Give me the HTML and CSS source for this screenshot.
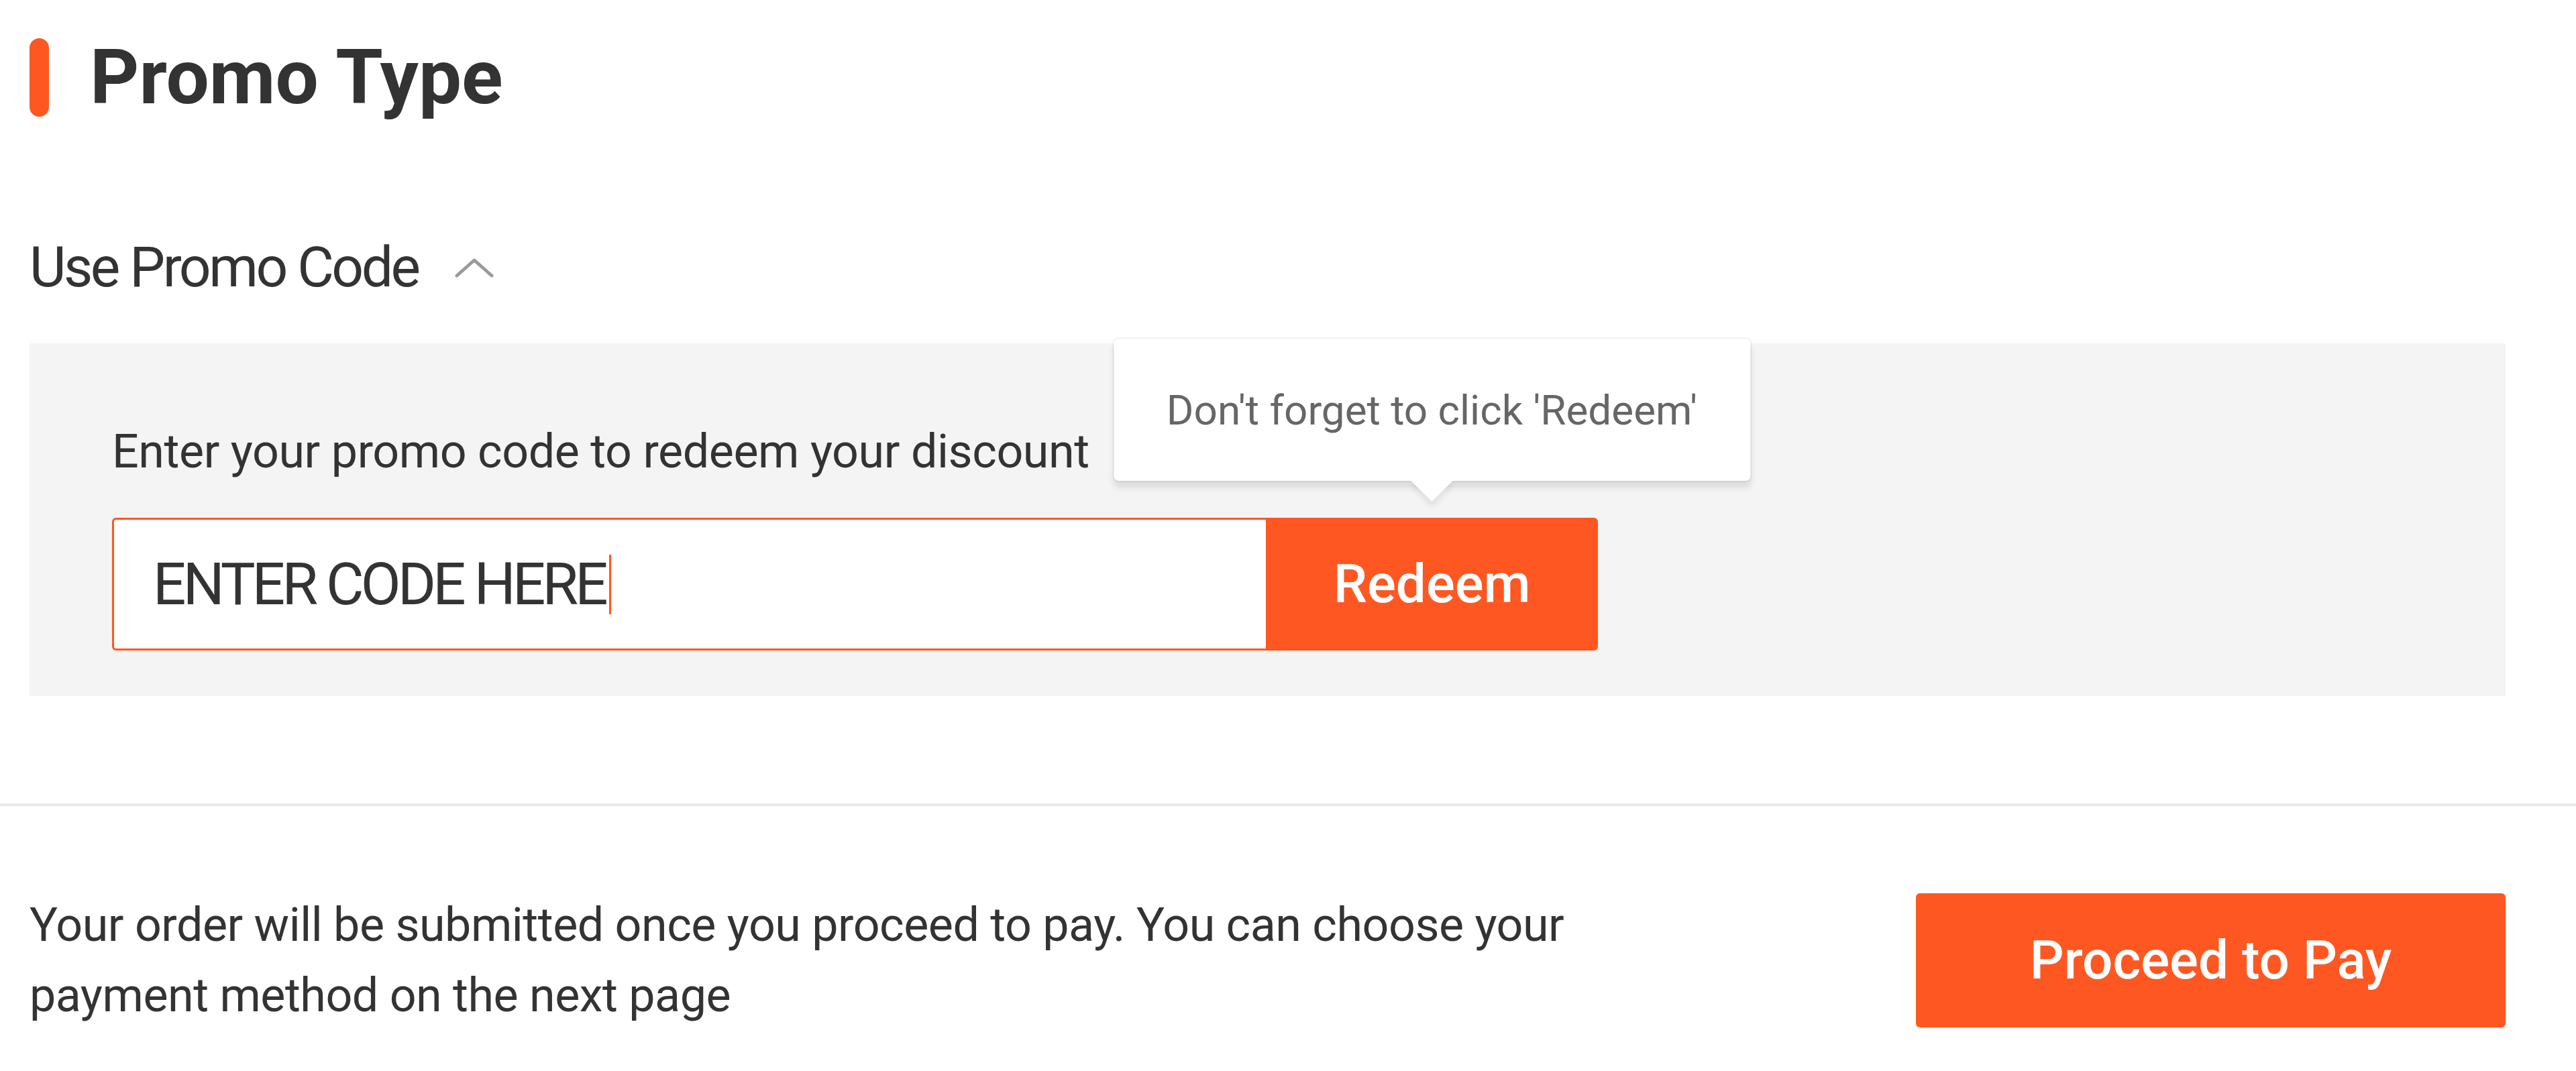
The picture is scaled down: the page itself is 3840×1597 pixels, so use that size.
FILE: index.html
```html
<!DOCTYPE html>
<html lang="en">
<head>
<meta charset="utf-8">
<title>Promo Type</title>
<link rel="stylesheet" href="styles.css">
</head>
<body>
<main class="checkout">
  <section class="promo">
    <header class="section-head">
      <span class="accent-bar"></span>
      <h2 class="section-title">Promo Type</h2>
    </header>

    <div class="toggle-row">
      <span class="toggle-label">Use Promo Code</span>
      <svg class="chevron" viewBox="0 0 58 30" width="58" height="30" aria-hidden="true">
        <polyline points="3,27 29,4 55,27" fill="none" stroke="#9a9a9a" stroke-width="5" stroke-linecap="round" stroke-linejoin="round"/>
      </svg>
    </div>

    <div class="promo-panel">
      <p class="promo-hint">Enter your promo code to redeem your discount</p>
      <div class="code-form">
        <div class="code-input" role="textbox">
          <span class="code-text">ENTER CODE HERE</span><span class="caret"></span>
        </div>
        <div class="redeem-wrap">
          <button class="btn redeem-btn" type="button">Redeem</button>
          <div class="tooltip">Don't forget to click 'Redeem'</div>
        </div>
      </div>
    </div>
  </section>

  <footer class="order-footer">
    <p class="order-note">Your order will be submitted once you proceed to pay. You can choose your payment method on the next page</p>
    <button class="btn pay-btn" type="button">Proceed to Pay</button>
  </footer>
</main>
</body>
</html>
```

FILE: styles.css
```css
* {
  box-sizing: border-box;
}

html, body {
  margin: 0;
  padding: 0;
  background: #ffffff;
}

body {
  font-family: Roboto, "Liberation Sans", Arial, sans-serif;
  color: #333333;
}

.checkout {
  width: 3840px;
}

.promo {
  padding: 57px 105px 0 44px;
}

.section-head {
  display: flex;
  align-items: center;
  gap: 61px;
  height: 117px;
}

.accent-bar {
  display: block;
  width: 29px;
  height: 117px;
  border-radius: 15px;
  background: #ff5722;
}

.section-title {
  margin: 0;
  font-size: 114px;
  line-height: 117px;
  font-weight: 700;
  color: #333333;
}

.toggle-row {
  display: flex;
  align-items: center;
  gap: 54px;
  height: 100px;
  margin-top: 175px;
}

.toggle-label {
  font-size: 84px;
  line-height: 100px;
  letter-spacing: -3.5px;
  color: #333333;
}

.chevron {
  display: block;
}

.promo-panel {
  margin-top: 63px;
  background: #f4f4f4;
  padding: 120px 123px 68px;
}

.promo-hint {
  margin: 0;
  font-size: 70px;
  line-height: 82px;
  letter-spacing: -0.45px;
  color: #333333;
}

.code-form {
  display: flex;
  margin-top: 58px;
  height: 198px;
}

.code-input {
  display: flex;
  align-items: center;
  width: 1720px;
  height: 198px;
  padding-left: 58px;
  background: #ffffff;
  border: 3px solid #ff5722;
  border-right: none;
  border-radius: 6px 0 0 6px;
}

.code-text {
  font-size: 87px;
  letter-spacing: -4.8px;
  color: #333333;
}

.caret {
  display: block;
  width: 3px;
  height: 89px;
  margin-left: 6px;
  background: #ff5722;
}

.redeem-wrap {
  position: relative;
  width: 495px;
  height: 198px;
}

.btn {
  border: none;
  background: #ff5722;
  color: #ffffff;
  font-family: Roboto, "Liberation Sans", Arial, sans-serif;
  font-weight: 500;
  cursor: pointer;
}

.redeem-btn {
  width: 100%;
  height: 100%;
  font-size: 80px;
  border-radius: 0 6px 6px 0;
}

.tooltip {
  position: absolute;
  left: 50%;
  bottom: calc(100% + 55px);
  transform: translateX(-50%);
  width: 949px;
  height: 212px;
  display: flex;
  align-items: center;
  justify-content: center;
  background: #ffffff;
  border-radius: 7px;
  font-size: 62px;
  color: #666666;
  white-space: nowrap;
  box-shadow: 0 0 0 2px rgba(0, 0, 0, 0.05), 0 10px 10px rgba(0, 0, 0, 0.10);
}

.tooltip::after {
  content: "";
  position: absolute;
  left: 50%;
  top: 100%;
  width: 44px;
  height: 44px;
  background: #ffffff;
  transform: translate(-50%, -22px) rotate(45deg);
  box-shadow: 6px 6px 8px rgba(0, 0, 0, 0.08);
}

.order-footer {
  display: flex;
  align-items: center;
  justify-content: space-between;
  margin-top: 160px;
  border-top: 4px solid #e8e8e8;
  padding: 125px 105px 60px 44px;
}

.order-note {
  margin: 0;
  max-width: 2450px;
  font-size: 70px;
  line-height: 105px;
  letter-spacing: -0.5px;
  color: #333333;
}

.pay-btn {
  width: 879px;
  height: 200px;
  font-size: 80px;
  border-radius: 6px;
}
```
